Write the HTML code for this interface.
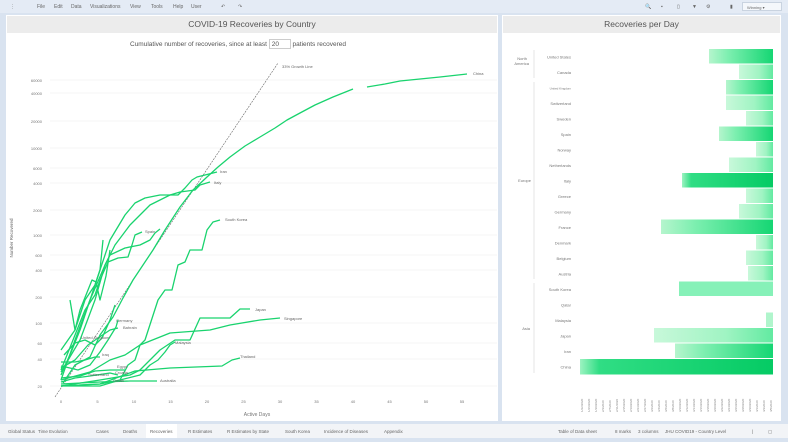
<!DOCTYPE html>
<html><head><meta charset="utf-8"><style>
*{margin:0;padding:0;box-sizing:border-box}
body{width:788px;height:442px;overflow:hidden;background:#d9e3f0;font-family:"Liberation Sans",sans-serif;position:relative;color:#555}
.tb{position:absolute;left:0;top:0;width:788px;height:13px;background:#e4ebf5;font-size:5px;color:#666}
.tb span{position:absolute;top:4px}
.panel{position:absolute;background:#fff}
.hdr{position:absolute;background:#ececec;color:#555;font-size:8.5px;text-align:center;line-height:17px}
.tabs{position:absolute;left:0;top:424px;width:788px;height:14px;background:#f2f4f7;font-size:4.5px;color:#666}
.tabs span{position:absolute;top:5px}
</style></head><body>
<div class="tb">
<span style="left:10px">⋮</span><span style="left:37px">File</span><span style="left:54px">Edit</span><span style="left:71px">Data</span><span style="left:90px">Visualizations</span><span style="left:130px">View</span><span style="left:151px">Tools</span><span style="left:173px">Help</span><span style="left:191px">User</span><span style="left:221px">↶</span><span style="left:238px">↷</span>
<span style="left:645px">🔍</span><span style="left:661px">▪</span><span style="left:677px">▯</span><span style="left:692px">▼</span><span style="left:706px">⚙</span><span style="left:730px">▮</span>
<div style="position:absolute;left:742px;top:2px;width:40px;height:9px;background:#f4f7fb;border:1px solid #c9d3e0;font-size:4px;padding:2px 4px">Winning ▾</div>
</div>

<div class="panel" style="left:6px;top:15px;width:492px;height:406px"></div>
<div class="hdr" style="left:7px;top:16px;width:490px;height:17px">COVID-19 Recoveries by Country</div>
<div style="position:absolute;left:130px;top:39px;font-size:6.5px;color:#555">Cumulative number of recoveries, since at least <span style="display:inline-block;border:1px solid #ccc;width:22px;height:10px;padding-left:2px;line-height:9px">20</span> patients recovered</div>

<div class="panel" style="left:502px;top:15px;width:279px;height:406px"></div>
<div class="hdr" style="left:503px;top:16px;width:277px;height:17px">Recoveries per Day</div>

<svg style="position:absolute;left:0;top:0" width="788" height="442">
<g stroke="#eee" stroke-width="0.6">
<line x1="50" x2="497" y1="80" y2="80"/><line x1="50" x2="497" y1="93" y2="93"/><line x1="50" x2="497" y1="121" y2="121"/><line x1="50" x2="497" y1="148" y2="148"/><line x1="50" x2="497" y1="168" y2="168"/><line x1="50" x2="497" y1="183" y2="183"/><line x1="50" x2="497" y1="210" y2="210"/><line x1="50" x2="497" y1="235" y2="235"/><line x1="50" x2="497" y1="255" y2="255"/><line x1="50" x2="497" y1="270" y2="270"/><line x1="50" x2="497" y1="297" y2="297"/><line x1="50" x2="497" y1="323" y2="323"/><line x1="50" x2="497" y1="343" y2="343"/><line x1="50" x2="497" y1="359" y2="359"/><line x1="50" x2="497" y1="386" y2="386"/>
</g>
<g font-size="4" fill="#777" text-anchor="end">
<text x="42" y="82">60000</text><text x="42" y="95">40000</text><text x="42" y="123">20000</text><text x="42" y="150">10000</text><text x="42" y="170">6000</text><text x="42" y="185">4000</text><text x="42" y="212">2000</text><text x="42" y="237">1000</text><text x="42" y="257">600</text><text x="42" y="272">400</text><text x="42" y="299">200</text><text x="42" y="325">100</text><text x="42" y="345">60</text><text x="42" y="361">40</text><text x="42" y="388">20</text>
</g>
<g font-size="4" fill="#777" text-anchor="middle">
<text x="61" y="403">0</text><text x="97.5" y="403">5</text><text x="134" y="403">10</text><text x="170.5" y="403">15</text><text x="207" y="403">20</text><text x="243.5" y="403">25</text><text x="280" y="403">30</text><text x="316.5" y="403">35</text><text x="353" y="403">40</text><text x="389.5" y="403">45</text><text x="426" y="403">50</text><text x="462" y="403">55</text>
<text x="257" y="416" font-size="5">Active Days</text>
</g>
<text x="13" y="238" font-size="4.5" fill="#666" text-anchor="middle" transform="rotate(-90 13 238)">Number Recovered</text>
<line x1="55" y1="397" x2="278" y2="63" stroke="#666" stroke-width="0.6" stroke-dasharray="2,1"/>
<g fill="none" stroke="#19d36e" stroke-width="1.3" stroke-linejoin="round">
<polyline points="63,383 75,365 90,357 100,335 113,317 123,298 133,280 143,265 153,250 165,230 180,207 193,190 207,177 218,167 230,157 245,146 260,137 275,128 287,120 300,113 315,105 333,97 353,89"/>
<polyline points="367,87 385,84 400,81 420,79 440,77 467,74"/>
<polyline points="61,380 75,340 90,300 105,265 115,245 130,225 150,205 170,195 180,192 195,190 200,185 210,182"/>
<polyline points="61,375 72,350 80,330 90,300 100,270 110,240 125,215 135,203 145,198 160,195 178,195 185,188 192,180 197,177 217,172"/>
<polyline points="61,370 85,310 95,295 100,280 108,262 118,258 128,257 132,245 135,235 142,232"/>
<polyline points="61,372 80,340 95,300 105,265 110,255 125,248 140,245 150,240 155,233 160,229"/>
<polyline points="61,386 100,386 120,380 128,365 135,360 140,345 145,340 158,300 165,290 172,290 178,265 185,262 190,250 202,250 207,230 213,222 220,220"/>
<polyline points="61,386 100,380 130,375 140,370 160,350 175,340 190,340 200,318 230,318 240,309 250,309"/>
<polyline points="61,380 90,372 110,360 125,355 140,345 170,333 210,330 230,325 260,320 280,318"/>
<polyline points="61,386 100,384 135,371 170,368 222,366 232,360 240,358"/>
<polyline points="61,386 100,384 120,380 140,375 150,365 158,360 165,352 170,345 175,342"/>
<polyline points="61,384 100,382 130,381 157,381"/>
<polyline points="61,382 75,378 90,376 110,373 118,375"/>
<polyline points="61,378 80,376 95,371 110,370 125,370"/>
<polyline points="61,366 70,368 78,370 90,365 100,352 108,340 116,327 118,320"/>
<polyline points="61,368 75,360 88,345 98,338 110,330 118,328"/>
<polyline points="64,355 75,343 85,340 95,345 102,338 110,320 115,305"/>
<polyline points="70,300 75,330 80,310 92,280 96,282 100,300 106,276 110,250"/>
<polyline points="61,350 68,340 75,330 85,300 95,285 100,270 103,240"/>
<polyline points="61,362 75,362 85,360 95,357 100,357"/>
</g>
<g font-size="4" fill="#666">
<text x="282" y="68">33% Growth Line</text><text x="473" y="75">China</text><text x="220" y="173">Iran</text><text x="214" y="184">Italy</text><text x="225" y="221">South Korea</text><text x="145" y="233">Spain</text><text x="255" y="311">Japan</text><text x="284" y="320">Singapore</text><text x="175" y="344">Malaysia</text><text x="240" y="358">Thailand</text><text x="160" y="382">Australia</text><text x="116" y="322">Germany</text><text x="123" y="329">Bahrain</text><text x="81" y="339">United Kingdom</text><text x="102" y="356">Iraq</text><text x="117" y="368">Egypt</text><text x="88" y="376">Switzerland</text><text x="115" y="374">Croatia</text><text x="113" y="382">Oman</text>
</g>

<g font-size="4" fill="#777" text-anchor="end">
<text x="571" y="58.5">United States</text><text x="571" y="74">Canada</text><text x="571" y="89.5" font-size="3">United Kingdom</text><text x="571" y="105">Switzerland</text><text x="571" y="120.5">Sweden</text><text x="571" y="136">Spain</text><text x="571" y="151.5">Norway</text><text x="571" y="167">Netherlands</text><text x="571" y="182.5">Italy</text><text x="571" y="198">Greece</text><text x="571" y="213.5">Germany</text><text x="571" y="229">France</text><text x="571" y="244.5">Denmark</text><text x="571" y="260">Belgium</text><text x="571" y="275.5">Austria</text><text x="571" y="291">South Korea</text><text x="571" y="306.5">Qatar</text><text x="571" y="322">Malaysia</text><text x="571" y="337.5">Japan</text><text x="571" y="353">Iran</text><text x="571" y="368.5">China</text>
<text x="527" y="60">North</text><text x="529" y="65">America</text><text x="531" y="182">Europe</text><text x="530" y="330">Asia</text>
</g>
<g stroke="#ccc" stroke-width="0.5"><line x1="534" y1="50" x2="534" y2="78"/><line x1="534" y1="82" x2="534" y2="279"/><line x1="534" y1="283" x2="534" y2="373"/></g>
<defs>
<linearGradient id="g1"><stop offset="0" stop-color="#b5f5cd"/><stop offset="0.3" stop-color="#7defb0"/><stop offset="1" stop-color="#15d673"/></linearGradient>
<linearGradient id="g2"><stop offset="0" stop-color="#c8f8da"/><stop offset="0.6" stop-color="#a0f4c3"/><stop offset="1" stop-color="#62eaa1"/></linearGradient>
<linearGradient id="g3"><stop offset="0" stop-color="#9cf3c1"/><stop offset="0.1" stop-color="#30dd84"/><stop offset="1" stop-color="#05cb64"/></linearGradient>
</defs>
<g>
<rect x="709" y="49" width="64" height="14.5" fill="url(#g1)"/>
<rect x="739" y="64.5" width="34" height="14.5" fill="url(#g2)"/>
<rect x="726" y="80" width="47" height="14.5" fill="url(#g1)"/>
<rect x="726" y="95.5" width="47" height="14.5" fill="url(#g2)"/>
<rect x="746" y="111" width="27" height="14.5" fill="url(#g2)"/>
<rect x="719" y="126.5" width="54" height="14.5" fill="url(#g1)"/>
<rect x="756" y="142" width="17" height="14.5" fill="url(#g2)"/>
<rect x="729" y="157.5" width="44" height="14.5" fill="url(#g2)"/>
<rect x="682" y="173" width="91" height="14.5" fill="url(#g3)"/>
<rect x="746" y="188.5" width="27" height="14.5" fill="url(#g2)"/>
<rect x="739" y="204" width="34" height="14.5" fill="url(#g2)"/>
<rect x="661" y="219.5" width="112" height="14.5" fill="url(#g1)"/>
<rect x="756" y="235" width="17" height="14.5" fill="url(#g2)"/>
<rect x="746" y="250.5" width="27" height="14.5" fill="url(#g2)"/>
<rect x="748" y="266" width="25" height="14.5" fill="url(#g2)"/>
<rect x="679" y="281.5" width="94" height="14.5" fill="#86f1b8"/>
<rect x="766" y="312.5" width="7" height="14.5" fill="#b0f5cc"/>
<rect x="654" y="328" width="119" height="14.5" fill="url(#g2)"/>
<rect x="675" y="343.5" width="98" height="14.5" fill="url(#g1)"/>
<rect x="580" y="359" width="193" height="15.5" fill="url(#g3)"/>
</g>
<g font-size="3" fill="#888">
<text transform="translate(583,412) rotate(-90)">1/22/2020</text><text transform="translate(590,412) rotate(-90)">1/26/2020</text><text transform="translate(597,412) rotate(-90)">1/30/2020</text><text transform="translate(604,412) rotate(-90)">2/3/2020</text><text transform="translate(611,412) rotate(-90)">2/7/2020</text><text transform="translate(618,412) rotate(-90)">2/11/2020</text><text transform="translate(625,412) rotate(-90)">2/15/2020</text><text transform="translate(632,412) rotate(-90)">2/19/2020</text><text transform="translate(639,412) rotate(-90)">2/23/2020</text><text transform="translate(646,412) rotate(-90)">2/27/2020</text><text transform="translate(653,412) rotate(-90)">3/2/2020</text><text transform="translate(660,412) rotate(-90)">3/4/2020</text><text transform="translate(667,412) rotate(-90)">3/6/2020</text><text transform="translate(674,412) rotate(-90)">3/8/2020</text><text transform="translate(681,412) rotate(-90)">3/10/2020</text><text transform="translate(688,412) rotate(-90)">3/12/2020</text><text transform="translate(695,412) rotate(-90)">3/14/2020</text><text transform="translate(702,412) rotate(-90)">3/16/2020</text><text transform="translate(709,412) rotate(-90)">3/18/2020</text><text transform="translate(716,412) rotate(-90)">3/20/2020</text><text transform="translate(723,412) rotate(-90)">3/22/2020</text><text transform="translate(730,412) rotate(-90)">3/24/2020</text><text transform="translate(737,412) rotate(-90)">3/26/2020</text><text transform="translate(744,412) rotate(-90)">3/28/2020</text><text transform="translate(751,412) rotate(-90)">3/30/2020</text><text transform="translate(758,412) rotate(-90)">4/1/2020</text><text transform="translate(765,412) rotate(-90)">4/3/2020</text><text transform="translate(772,412) rotate(-90)">4/5/2020</text>
</g>
</svg>

<div class="tabs">
<span style="left:8px">Global Status</span><span style="left:38px">Time Evolution</span><span style="left:96px">Cases</span><span style="left:123px">Deaths</span>
<span style="left:146px;top:0;height:14px;background:#fff;padding:5px 4px 0">Recoveries</span>
<span style="left:188px">R Estimates</span><span style="left:227px">R Estimates by State</span><span style="left:285px">South Korea</span><span style="left:324px">Incidence of Diseases</span><span style="left:384px">Appendix</span>
<span style="left:558px">Table of Data sheet</span><span style="left:615px">8 marks</span><span style="left:638px">3 columns</span><span style="left:665px">JHU COVID19 - Country Level</span><span style="left:752px">|</span><span style="left:768px">▢</span>
</div>
</body></html>
